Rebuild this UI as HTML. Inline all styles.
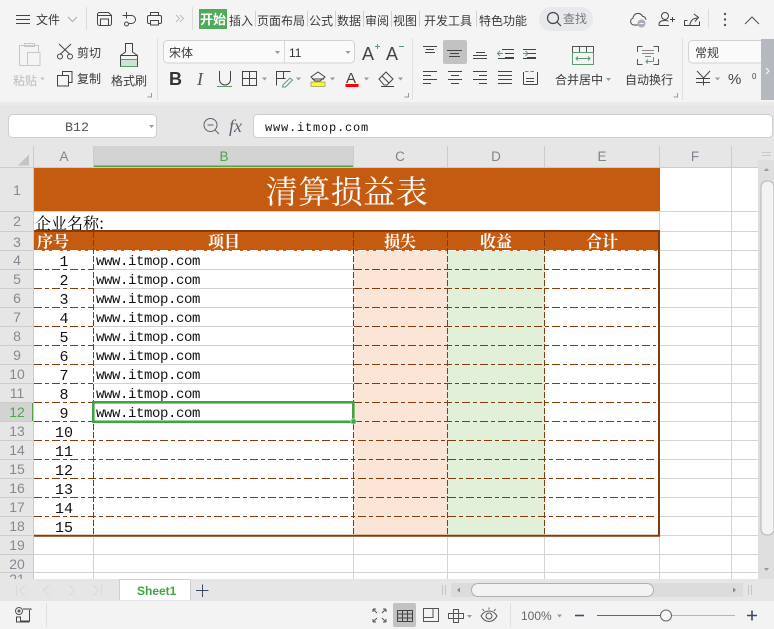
<!DOCTYPE html>
<html lang="zh"><head><meta charset="utf-8"><title>清算损益表</title>
<style>
html,body{margin:0;padding:0;background:#e6e6e6}
#p{position:relative;width:774px;height:629px;overflow:hidden;font-family:"Liberation Sans","Noto Sans CJK SC",sans-serif;background:#e6e6e6}
#p>svg{position:absolute;left:0;top:0}
.t{font-family:"Noto Sans CJK SC",sans-serif;font-size:12px;fill:#3a3a3a}
.h{font-family:"Liberation Sans",sans-serif;font-size:13.5px;fill:#7d8490;text-anchor:middle}
.rh{font-family:"Liberation Sans",sans-serif;font-size:14px;fill:#858a92;text-anchor:middle}
.m{font-family:"Liberation Mono",monospace;font-size:14px;letter-spacing:-.4px;fill:#111}
.n{font-family:"Liberation Mono",monospace;font-size:15px;fill:#111;text-anchor:middle}
.c{font-family:"Noto Serif CJK SC",serif;font-size:16px;fill:#000}
.w{font-family:"Noto Serif CJK SC",serif;font-size:16px;fill:#fff;font-weight:700;text-anchor:middle}
.i{fill:none;stroke:#444;stroke-width:1}
.g{stroke:#d4d4d4;stroke-width:1;fill:none}
.da{stroke:#843c0c;stroke-width:1;stroke-dasharray:8 3 4 3;fill:none}
.dv{stroke:#843c0c;stroke-width:1;stroke-dasharray:6 2;fill:none}
.ar{fill:#999}
</style></head><body><div id="p">
<svg width="774" height="629" viewBox="0 0 774 629" xmlns="http://www.w3.org/2000/svg">
<!-- Ribbon bg -->
<rect x="0" y="0" width="774" height="102" fill="#f4f4f4"/>
<rect x="0" y="102" width="774" height="3" fill="#eaeaea"/>
<rect x="0" y="105" width="774" height="41" fill="#e6e6e6"/>

<!-- top row -->
<path class="i" d="M16 15.500H30M16 19.500H30M16 23.500H30"/>
<text class="t" x="36" y="24">文件</text>
<path d="M68 17l4.500 4.500 4.500-4.500" fill="none" stroke="#aaa" stroke-width="1"/>
<path d="M86.500 7V30M192.500 7V30M708.500 9V28" stroke="#dcdcdc" stroke-width="1"/>
<path class="i" d="M97.500 14.500a2 2 0 0 1 2-2h9l3 3v8a2 2 0 0 1-2 2h-10a2 2 0 0 1-2-2zM98 15.500h13M100.500 25v-6h8v6"/>
<path class="i" d="M122.500 15.500h9a4 4 0 0 1 0 8h-2.500M126.500 12v6.500"/><circle class="i" cx="126.500" cy="24" r="2"/>
<path class="i" d="M150.500 16v-3.500h8v3.500M149 15.500h11a1.500 1.500 0 0 1 1.500 1.500v5a1.500 1.500 0 0 1-1.500 1.500h-1.500M150.500 23.500h-1.500a1.500 1.500 0 0 1-1.500-1.500v-5a1.500 1.500 0 0 1 1.500-1.500M150.500 20.500h8v4.500h-8z"/>
<path d="M176 15l3.500 3.500-3.500 3.500M180 15l3.500 3.500-3.500 3.500" fill="none" stroke="#bbb" stroke-width="1"/>

<rect x="199" y="9" width="28" height="20" fill="#4fab5a"/>
<text x="200" y="24" style="font-family:'Noto Sans CJK SC',sans-serif;font-size:13px;fill:#fff;font-weight:700">开始</text>
<g>
<text class="t" x="229" y="25">插入</text>
<text class="t" x="257" y="25">页面布局</text>
<text class="t" x="309" y="25">公式</text>
<text class="t" x="337" y="25">数据</text>
<text class="t" x="365" y="25">审阅</text>
<text class="t" x="393" y="25">视图</text>
<text class="t" x="424" y="25">开发工具</text>
<text class="t" x="479" y="25">特色功能</text>
</g>
<path d="M255.500 11V27M307.500 11V27M335.500 11V27M363.500 11V27M391.500 11V27M419.500 11V27M476.500 11V27" stroke="#d0d0d0" stroke-width="1"/>
<rect x="539" y="7" width="54" height="24" rx="12" fill="#e8e9ec"/>
<circle cx="553" cy="18" r="5.500" fill="none" stroke="#444" stroke-width="1.200"/><path d="M557 22l4 4" stroke="#444" stroke-width="1.200"/>
<text class="t" x="563" y="23" style="fill:#777">查找</text>

<path class="i" d="M641 25h-7a3.500 3.500 0 0 1-1-6.800 5 5 0 0 1 9.500-2 4 4 0 0 1 3.500 3.500"/><circle cx="641.500" cy="23.500" r="4" fill="#a8adb8"/><path d="M639.500 23.500h4" stroke="#fff" stroke-width="1"/>
<circle class="i" cx="665" cy="16" r="3.500"/><path class="i" d="M659 25.500v-1c0-2.500 2-4 6-4 1.500 0 2.500.2 3.500.7M659 25.500h10M670 19.500h5M672.500 17v5"/>
<path class="i" d="M684.500 20.500v5h15v-4M684.500 20.500h3M690 25c0-4 3-7 8-7M694 14l4.500 3.500-3.500 4"/>
<circle cx="725" cy="14" r="1.200" fill="#555"/><circle cx="725" cy="19.500" r="1.200" fill="#555"/><circle cx="725" cy="25" r="1.200" fill="#555"/>
<path d="M745 24l7-7 7 7" fill="none" stroke="#555" stroke-width="1.100"/>

<!-- clipboard group -->
<g fill="none" stroke="#c8c8c8" stroke-width="1"><path d="M27 65.500h-7.500v-20h19v6.500M24.500 43.500h10v3h-10z"/><rect x="27.500" y="52.500" width="12.500" height="13"/></g>
<text class="t" x="13" y="85" style="fill:#bcbcbc">粘贴</text>
<path d="M40 77.500h5l-2.500 3z" fill="#c8c8c8"/>
<path class="i" d="M59 44l11 10.500M71 44l-11 10.500"/><circle class="i" cx="60" cy="56.500" r="2.500"/><circle class="i" cx="70" cy="56.500" r="2.500"/>
<text class="t" x="77" y="57">剪切</text>
<path class="i" d="M62.500 75v-3.500h9.500v11h-3.500M57.500 75.500h11v10.500h-11z"/>
<text class="t" x="77" y="83">复制</text>
<path class="i" d="M125.500 43.500h7v8.500l5 3.500v11h-17v-11l5-3.500zM120.500 55.500h17" stroke="#666"/>
<rect x="121" y="59" width="16" height="7" fill="#cfe3d3"/>
<path d="M120.500 59.500h17M120.500 66.500h17" stroke="#5c9a70" stroke-width="1"/>
<text class="t" x="111" y="85">格式刷</text>
<path d="M151.500 93v4h-4" fill="none" stroke="#999"/>
<path d="M157.500 38V100M412.500 38V100M682.500 38V100" stroke="#e0e0e0"/>

<!-- font box -->
<rect x="163.500" y="40.500" width="191" height="22.500" rx="4" fill="#fafafa" stroke="#d2d2d2"/>
<path d="M284.500 41V63" stroke="#d8d8d8"/>
<text class="t" x="169" y="57">宋体</text>
<text x="289" y="57" style="font-family:'Liberation Sans';font-size:12px;fill:#333">11</text>
<path class="ar" d="M275 51h5l-2.500 3zM345.500 51h5l-2.500 3z"/>
<text x="362" y="60" style="font-family:'Liberation Sans';font-size:18px;fill:#444">A</text>
<path d="M375 46.500h5M377.500 44v5" stroke="#5c9a70"/>
<text x="386" y="60" style="font-family:'Liberation Sans';font-size:18px;fill:#444">A</text>
<path d="M399 46.500h5" stroke="#5c9a70"/>
<text x="169" y="85" style="font-family:'Liberation Sans';font-size:18px;font-weight:700;fill:#333">B</text>
<text x="197" y="85" style="font-family:'Liberation Serif';font-size:18px;font-style:italic;fill:#555">I</text>
<path class="i" d="M219.500 71v8.500a5.500 5.500 0 0 0 11 0v-8.500"/><path d="M217 86.500h15" stroke="#5c9a70" stroke-width="1"/>
<path class="i" d="M242.500 71.500h14v14h-14zM249.500 71.500v14M242.500 78.500h14"/><path class="ar" d="M262 77.500h5l-2.500 3z"/>
<path class="i" d="M276.500 85.500v-14h14M276.500 78.500h9M283.500 72v7"/><path d="M283 85l7-7 2.500 2-7 7h-3z" fill="none" stroke="#5c9a70"/><path class="ar" d="M296 77.500h5l-2.500 3z"/>
<path class="i" d="M311 77l7-5 7 5-5 4h-5zM312 79h12"/><rect x="311" y="82" width="14" height="4.500" fill="#ffff00" stroke="#999" stroke-width=".8"/><path class="ar" d="M330 77.500h5l-2.500 3z"/>
<text x="346" y="83" style="font-family:'Liberation Sans';font-size:15px;fill:#444">A</text><rect x="345.500" y="84" width="13" height="3" fill="#ff0000"/><path class="ar" d="M364 77.500h5l-2.500 3z"/>
<path class="i" d="M379 79l7-7 7 7-6 6h-3zM382 76l7 7M381 86.500h13"/><path class="ar" d="M398 77.500h5l-2.500 3z"/>
<path d="M408.500 93v4h-4" fill="none" stroke="#999"/>

<!-- align -->
<rect x="443" y="40" width="24" height="24" rx="2" fill="#c2c2c2"/>
<g fill="none" stroke="#444" stroke-width="1">
<path d="M423 46.500h14M426 49.500h8M425 52.500h10"/>
<path d="M447 50.500h15M450 53.500h9M449 56.500h11"/>
<path d="M476 52.500h9M473 55.500h14M473 58.500h14"/>
<path d="M502 49.500h12M505 53.500h9M505 57.500h9M498 58.500h16"/>
<path d="M523 49.500h13M527 53.500h9M527 57.500h9M523 58.500h13"/>
<path d="M423 71.500h14M423 75.500h8M423 79.500h14M423 83.500h8"/>
<path d="M448 71.500h14M451 75.500h8M448 79.500h14M451 83.500h8"/>
<path d="M473 71.500h14M479 75.500h8M473 79.500h14M479 83.500h8"/>
<path d="M498 71.500h14M498 75.500h14M498 79.500h14M498 83.500h14"/>
<path d="M523.500 72v12.500M537.500 72v12.500M523.500 84.500h14M526 78.500h8M526 81.500h8"/>
</g>
<path d="M498 53.500h5M500 51l-2.500 2.500 2.500 2.500M523 53.500h5M525.500 51l2.500 2.500-2.500 2.500M525 71.500h3.500M534 71.500h-3.500" fill="none" stroke="#5c9a70" stroke-width="1"/>
<path d="M572.500 46.500h21v6h-21zM579.500 46.500v6M586.500 46.500v6" fill="none" stroke="#555"/>
<rect x="572.500" y="52.500" width="21" height="12" fill="none" stroke="#5c9a70"/>
<path d="M576 58.500h14M578 56.500l-2 2 2 2M588 56.500l2 2-2 2" fill="none" stroke="#5c9a70"/>
<text class="t" x="555" y="84">合并居中</text><path class="ar" d="M606 78h5l-2.500 3z"/>
<path d="M637.500 52v-5.500h5M653.500 46.500h5v5.500M637.500 59v5.500h5M653.500 64.500h5v-5.500" fill="none" stroke="#555" stroke-width="1"/>
<path d="M642 50.500h12M642 53.500h12M645 56.500h6" stroke="#888"/>
<path d="M653.500 57v4.500h-7M648 59.500l-2 2 2 2" fill="none" stroke="#5c9a70"/>
<text class="t" x="625" y="84">自动换行</text>
<path d="M677.500 93v4h-4" fill="none" stroke="#999"/>
<rect x="688.500" y="40.500" width="80" height="22.500" rx="4" fill="#fafafa" stroke="#d2d2d2"/>
<text class="t" x="695" y="57">常规</text>
<path d="M697 71l6.500 7 6.500-7M696 78.500h14M696 82.500h14M703.500 78v7.500" fill="none" stroke="#444" stroke-width="1"/>
<path class="ar" d="M715 77.500h5l-2.500 3z"/>
<text x="728" y="84" style="font-family:'Liberation Sans';font-size:15px;fill:#444">%</text>
<text x="752" y="79" style="font-family:'Liberation Sans';font-size:8px;fill:#444">0</text>
<rect x="761" y="39" width="13" height="61" fill="#b6b8c0"/>
<path d="M766 68l3 3-3 3" fill="none" stroke="#fff"/>

<!-- formula bar -->
<rect x="8.500" y="114.500" width="148" height="23" rx="4" fill="#fff" stroke="#cfcfcf"/>
<text x="77" y="131" style="font-family:'Liberation Mono',monospace;font-size:13.33px;fill:#555;text-anchor:middle">B12</text>
<path class="ar" d="M149 125h5l-2.500 3z"/>
<circle cx="210.500" cy="125" r="6.500" fill="none" stroke="#5c6470" stroke-width="1"/><path d="M207.500 125h6M215 130l4 4" stroke="#5c6470" stroke-width="1"/>
<text x="229" y="132" style="font-family:'Liberation Serif',serif;font-size:18px;font-style:italic;fill:#5c6470">fx</text>
<rect x="253.500" y="114.500" width="519" height="23" rx="4" fill="#fff" stroke="#cfcfcf"/>
<text x="265" y="131" style="font-family:'Liberation Mono',monospace;font-size:12px;letter-spacing:.8px;fill:#111">www.itmop.com</text>

<!-- grid canvas -->
<rect x="0" y="146" width="758" height="433" fill="#e6e6e6"/>
<rect x="34" y="168" width="724" height="411" fill="#fff"/>
<rect x="94" y="146" width="260" height="21" fill="#d3d3d3"/>
<rect x="94" y="165.500" width="260" height="2" fill="#4ea646"/>
<rect x="0" y="403" width="33" height="19" fill="#d3d3d3"/>
<rect x="32" y="403" width="2" height="19" fill="#4ea646"/>
<path d="M18 165.500h11v-11z" fill="#c4c4c4"/>
<path d="M33.500 146V579M93.500 146V167M353.500 146V167M447.500 146V167M544.500 146V167M659.500 146V167M731.500 146V168M0 167.500H758M0 211.500H34M0 231.500H34M0 250.500H34M0 269.500H34M0 288.500H34M0 307.500H34M0 326.500H34M0 345.500H34M0 364.500H34M0 383.500H34M0 402.500H34M0 421.500H34M0 440.500H34M0 459.500H34M0 478.500H34M0 497.500H34M0 516.500H34M0 535.500H34M0 554.500H34M0 572.500H34" stroke="#cccccc" stroke-width="1" fill="none"/>
<path class="g" d="M731.500 168V579M660 211.500H758M660 231.500H758M660 250.500H758M660 269.500H758M660 288.500H758M660 307.500H758M660 326.500H758M660 345.500H758M660 364.500H758M660 383.500H758M660 402.500H758M660 421.500H758M660 440.500H758M660 459.500H758M660 478.500H758M660 497.500H758M660 516.500H758M660 535.500H758M34 554.500H758M34 572.500H758M93.500 537V579M353.500 537V579M447.500 537V579M544.500 537V579M659.500 168V579M34 211.500H660"/>
<g>
<text class="h" x="64" y="161">A</text><text class="h" x="224" y="161" style="fill:#4ea646">B</text><text class="h" x="400" y="161">C</text><text class="h" x="496" y="161">D</text><text class="h" x="602" y="161">E</text><text class="h" x="695" y="161">F</text>
</g>
<g>
<text class="rh" x="17" y="195">1</text><text class="rh" x="17" y="226">2</text><text class="rh" x="17" y="247">3</text><text class="rh" x="17" y="265">4</text><text class="rh" x="17" y="284">5</text><text class="rh" x="17" y="303">6</text><text class="rh" x="17" y="322">7</text><text class="rh" x="17" y="341">8</text><text class="rh" x="17" y="360">9</text><text class="rh" x="17" y="379">10</text><text class="rh" x="17" y="398">11</text><text class="rh" x="17" y="417" style="fill:#4ea646">12</text><text class="rh" x="17" y="436">13</text><text class="rh" x="17" y="455">14</text><text class="rh" x="17" y="474">15</text><text class="rh" x="17" y="493">16</text><text class="rh" x="17" y="512">17</text><text class="rh" x="17" y="531">18</text><text class="rh" x="17" y="550">19</text><text class="rh" x="17" y="569">20</text><text class="rh" x="17" y="584">21</text>
</g>
<rect x="0" y="579" width="774" height="50" fill="#e6e6e6"/>

<!-- sheet content -->
<rect x="34" y="168" width="626" height="43" fill="#c55a11"/>
<text x="347" y="203" text-anchor="middle" style="font-family:'Noto Serif CJK SC',serif;font-size:32px;letter-spacing:.5px;fill:#fff">清算损益表</text>
<text class="c" x="35" y="229">企业名称:</text>
<rect x="34" y="232" width="625" height="19" fill="#c55a11"/>
<rect x="354" y="251" width="94" height="284" fill="#fbe5d6"/>
<rect x="448" y="251" width="97" height="284" fill="#e2f0d9"/>
<g>
<text class="w" x="53" y="247">序号</text><text class="w" x="224" y="247">项目</text><text class="w" x="400" y="247">损失</text><text class="w" x="496" y="247">收益</text><text class="w" x="602" y="247">合计</text>
</g>
<path d="M34 250.500H658" stroke="#fff" stroke-width="1" stroke-dasharray="8 3 4 3"/>
<path d="M94 269.500H353M94 288.500H353M94 307.500H353M94 326.500H353M94 345.500H353M94 364.500H353M94 383.500H353M94 402.500H353" stroke="#d0d0d0" fill="none"/>
<path class="da" d="M34 269.500H93M34 288.500H93M34 307.500H93M34 326.500H93M34 345.500H93M34 364.500H93M34 383.500H93M34 402.500H93M34 421.500H93M34 440.500H656M34 459.500H656M34 478.500H656M34 497.500H656M34 516.500H656M354 269.500H656M354 288.500H656M354 307.500H656M354 326.500H656M354 345.500H656M354 364.500H656M354 383.500H656M354 402.500H656M354 421.500H656"/>
<path class="dv" d="M93.500 232V535M353.500 232V535M447.500 232V535M544.500 232V535"/>
<path d="M34 231H659V535.700H34" fill="none" stroke="#843c0c" stroke-width="2"/>
<g>
<text class="n" x="64" y="266">1</text><text class="n" x="64" y="285">2</text><text class="n" x="64" y="304">3</text><text class="n" x="64" y="323">4</text><text class="n" x="64" y="342">5</text><text class="n" x="64" y="361">6</text><text class="n" x="64" y="380">7</text><text class="n" x="64" y="399">8</text><text class="n" x="64" y="418">9</text><text class="n" x="64" y="437">10</text><text class="n" x="64" y="456">11</text><text class="n" x="64" y="475">12</text><text class="n" x="64" y="494">13</text><text class="n" x="64" y="513">14</text><text class="n" x="64" y="532">15</text>
</g>
<g>
<text class="m" x="96" y="265">www.itmop.com</text><text class="m" x="96" y="284">www.itmop.com</text><text class="m" x="96" y="303">www.itmop.com</text><text class="m" x="96" y="322">www.itmop.com</text><text class="m" x="96" y="341">www.itmop.com</text><text class="m" x="96" y="360">www.itmop.com</text><text class="m" x="96" y="379">www.itmop.com</text><text class="m" x="96" y="398">www.itmop.com</text><text class="m" x="96" y="417">www.itmop.com</text>
</g>
<rect x="93.300" y="402.300" width="260" height="19.500" fill="none" stroke="#3fa544" stroke-width="2.600"/>
<rect x="351" y="419" width="5" height="5" fill="#3fa544" stroke="#fff" stroke-width=".6"/>

<!-- v scroll -->
<rect x="758" y="146" width="16" height="433" fill="#e6e6e6"/>
<path d="M762 152.500h9M762 155.500h9" stroke="#c8c8c8"/>
<rect x="758" y="160" width="16" height="419" fill="#dedede"/>
<path d="M764 171l2.500-3 2.500 3z" fill="#999"/>
<rect x="761" y="181" width="13" height="354" rx="6" fill="#f3f3f3" stroke="#b5b5b5"/>
<path d="M764 568l2.500 3 2.500-3z" fill="#999"/>

<!-- tabs -->
<path d="M16.500 585v11M25 585l-5.500 5.500 5.500 5.500M49 585l-5.500 5.500 5.500 5.500M69 585l5.500 5.500-5.500 5.500M93 585l5.500 5.500-5.500 5.500M101.500 585v11" fill="none" stroke="#dadada"/>
<path d="M119.500 600V579.500H190.500V600" fill="#fff" stroke="#d0d0d0"/>
<text x="137" y="595" style="font-family:'Liberation Sans',sans-serif;font-size:12px;font-weight:700;fill:#3fa544">Sheet1</text>
<path d="M196 590.500h12.500M202.500 584.500v12.500" stroke="#3c4a64" stroke-width="1"/>
<path d="M442.500 585v10M445.500 585v10M748.500 585v10M751.500 585v10" stroke="#c6c6c6"/>
<rect x="451" y="583" width="292" height="14" fill="#dcdcdc"/>
<path d="M460 587.500l-3 2.500 3 2.500z" fill="#888"/>
<path d="M733 587.500l3 2.500-3 2.500z" fill="#888"/>
<rect x="471.500" y="583.500" width="182" height="13" rx="6.500" fill="#f3f3f3" stroke="#b0b0b0"/>

<!-- status bar -->
<rect x="0" y="601" width="774" height="28" fill="#f3f3f3"/>
<circle cx="19" cy="611" r="3.500" fill="none" stroke="#555"/><circle cx="19" cy="611" r="1.500" fill="#555"/>
<path class="i" d="M23 609h8v1M29.500 610v11h-9v-4h-4v5h13M16 617h4"/>
<path d="M46.500 603V627M510.500 603V627" stroke="#e0e0e0"/>
<path d="M373 609l4 4M373 609h3M373 609v3M386 609l-4 4M386 609h-3M386 609v3M373 622l4-4M373 622h3M373 622v-3M386 622l-4-4M386 622h-3M386 622v-3" fill="none" stroke="#555"/>
<rect x="393" y="603" width="23" height="24" rx="2" fill="#c2c2c2"/>
<path d="M397.500 610.500h15v11h-15zM397.500 614h15M397.500 618h15M402.500 610.500v11M407.500 610.500v11" fill="none" stroke="#444" stroke-width="1"/>
<path d="M423.500 608.500h15v13h-15zM423.500 617.500h9.500v-9" fill="none" stroke="#555" stroke-width="1"/>
<path d="M453.500 609.500h5v4h5v5h-5v4h-5v-4h-5v-5h5zM453.500 613.500h5v5h-5z" fill="none" stroke="#555" stroke-width="1"/>
<path class="ar" d="M467 615h5l-2.500 3z"/>
<path d="M481 616c2-3.500 5-5 8-5s6 1.500 8 5c-2 3.500-5 5.500-8 5.500s-6-2-8-5.500z" fill="none" stroke="#555"/><circle cx="489" cy="616" r="3" fill="none" stroke="#555"/>
<path d="M489 607.500v2M482.500 609l1.500 2M495.500 609l-1.500 2" stroke="#555"/>
<text x="521" y="620" style="font-family:'Liberation Sans';font-size:12px;fill:#666">100%</text>
<path class="ar" d="M557 614.500h5l-2.500 3z"/>
<path d="M575 615.500h9" stroke="#3c4a64" stroke-width="1.600"/>
<path d="M597 615.500h65" stroke="#666"/><path d="M670 615.500h65" stroke="#b5b5b5"/>
<circle cx="666" cy="615.500" r="5.500" fill="#f5f5f5" stroke="#666"/>
<path d="M747 615.500h10M752 610.500v10" stroke="#3c4a64" stroke-width="1.600"/>
</svg>
</div></body></html>
